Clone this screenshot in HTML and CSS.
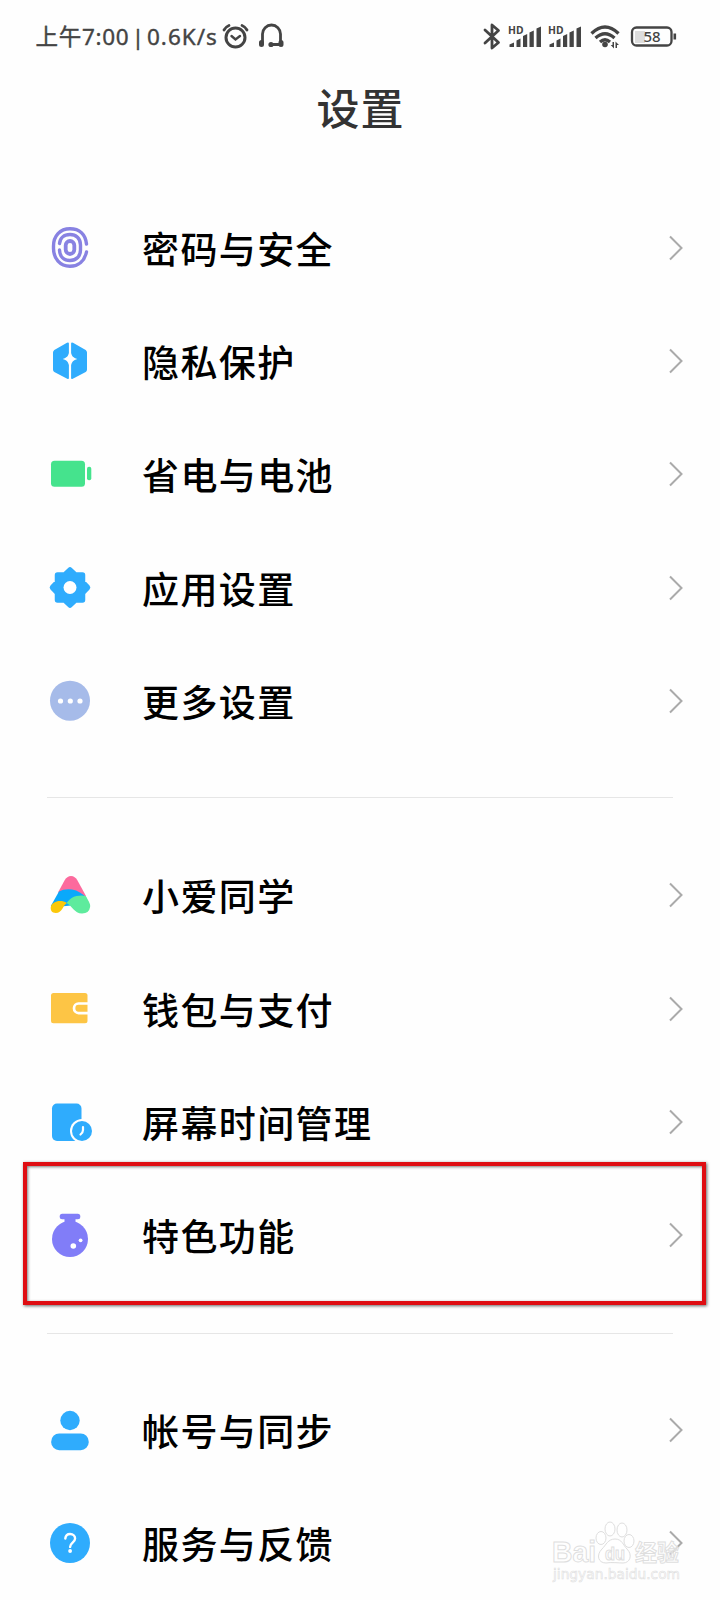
FILE: index.html
```html
<!DOCTYPE html>
<html lang="zh-CN">
<head>
<meta charset="utf-8">
<title>设置</title>
<link rel="stylesheet" href="styles.css">
</head>
<body>
<div class="screen">
  <header class="status">
    <span class="clock">上午7:00</span><span class="bar">|</span><span class="speed">0.6K/s</span>
    <svg class="left-icons" width="64" height="32" viewBox="222 21 64 32" fill="none" stroke="#444" stroke-linecap="round">
      <circle cx="235.500" cy="37.500" r="9.500" stroke-width="3"/>
      <path d="M231.500 36l4 3.500 4.500-3.500" stroke-width="2.400"/>
      <path d="M224 30q1.500-3 5-4.500M247 30q-1.500-3-5-4.500" stroke-width="2.800"/>
      <path d="M262.500 42.500v-8.500a9 9 0 0 1 18 0v8.500M272 44.500h8" stroke-width="2.800"/>
      <path d="M261.500 42.500v2M281 42.500v2" stroke-width="5"/>
      <circle cx="271" cy="44.500" r="2.600" fill="#444" stroke="none"/>
    </svg>
    <svg class="right-icons" width="206" height="36" viewBox="478 19 206 36" fill="none" stroke="#444">
      <path d="M485 30l13.500 12.500-6.500 5.500v-23l6.500 5.500L485 43" stroke-width="2.800" stroke-linejoin="round" stroke-linecap="round"/>
      <g fill="#444" stroke="none">
        <text class="hd" x="508" y="34" textLength="15.500" lengthAdjust="spacingAndGlyphs">HD</text>
        <text class="hd" x="548" y="34" textLength="15.500" lengthAdjust="spacingAndGlyphs">HD</text>
        <path id="signal" d="M509.500 47v-2.500l4.500-2V47zM516.500 47v-6.500l4-2V47zM523 47V36l4.200-2v13zM529.500 47V32.500l4.300-2V47zM536.500 47V28.500l4.500-2V47z"/>
        <use href="#signal" x="40"/>
        <circle cx="605" cy="44.500" r="2.800"/>
        <path d="M614 42v6.500l-3.300-3.500h1.800v-3zM615.500 48v-6.500l3.500 3.500h-2v3z"/>
      </g>
      <path d="M591.500 33.500q13.500-13 27 0M595.500 38q9.500-8.500 19 0M600 42q5-4.500 10 0" stroke-width="3.300"/>
      <path d="M635 31h10v12h-10z" fill="#ddd" stroke="none"/>
      <rect x="632" y="27.500" width="39.500" height="18" rx="4.500" stroke-width="2.300"/>
      <path d="M674.800 33.500v6" stroke-width="2.600"/>
      <text class="charge" x="643.500" y="42.200">58</text>
    </svg>
  </header>
  <h1 class="title">设置</h1>

  <ul class="group">
    <li class="row">
      <svg class="icon" viewBox="0 0 48 48" fill="none" stroke="#8882e2" stroke-width="3.400" stroke-linecap="round">
        <path d="M40.500 28C38.500 37 32.500 42.300 24 42.300 14 42.300 7.500 34.500 7.500 24.500v-2.500C7.500 12 14 4.700 24 4.700c9.500 0 15.500 5.500 16.500 15.300"/>
        <path d="M13.500 19.500c.5-5.500 4.500-9 10.500-9s10.500 4 10.500 10.500v5c0 6-4 10.500-10.500 10.500-6 0-10.300-3.700-10.500-10.500"/>
        <rect x="19.700" y="17" width="8.600" height="13" rx="4.300" stroke-width="3.800"/>
      </svg>
      <span class="label">密码与安全</span><svg class="chevron" viewBox="0 0 16 28"><path d="M2 2.500L13.500 14 2 25.500"/></svg>
    </li>
    <li class="row">
      <svg class="icon" viewBox="0 0 48 48" fill="#2facfd">
        <path d="M22.900 6.500v9.500c-.7 3-2.200 4.800-6.200 6 4 1 5.500 3 6.200 6V41q0 1.500-1.700.7L8.300 35Q7 34.200 7 32.500v-17Q7 14 8.300 13L21 5.800q1.900-.6 1.900.7z"/>
        <path d="M25.100 6.500v9.500c.7 3 2.200 4.800 6.200 6-4 1-5.500 3-6.200 6V41q0 1.500 1.700.7L39.700 35q1.300-.8 1.300-2.500v-17q0-1.500-1.300-2.500L27 5.800q-1.900-.6-1.900.7z"/>
      </svg>
      <span class="label">隐私保护</span><svg class="chevron" viewBox="0 0 16 28"><path d="M2 2.500L13.500 14 2 25.500"/></svg>
    </li>
    <li class="row">
      <svg class="icon" viewBox="0 0 48 48" fill="#45e38d">
        <rect x="5" y="10.700" width="34" height="26" rx="3.500"/><rect x="41" y="16.700" width="4.300" height="13.500" rx="2"/>
      </svg>
      <span class="label">省电与电池</span><svg class="chevron" viewBox="0 0 16 28"><path d="M2 2.500L13.500 14 2 25.500"/></svg>
    </li>
    <li class="row">
      <svg class="icon" viewBox="0 0 48 48">
        <path d="M24 6l5.300 5h7.200v7.200L41.500 23.500l-5 5.300V36h-7.200L24 41l-5.300-5h-7.200v-7.200L6.500 23.500l5-5.300V11h7.200z" fill="#2facfd" stroke="#2facfd" stroke-width="5.500" stroke-linejoin="round"/>
        <circle cx="24" cy="23.500" r="6.500" fill="#fff"/>
      </svg>
      <span class="label">应用设置</span><svg class="chevron" viewBox="0 0 16 28"><path d="M2 2.500L13.500 14 2 25.500"/></svg>
    </li>
    <li class="row">
      <svg class="icon" viewBox="0 0 48 48">
        <circle cx="24" cy="23.700" r="20" fill="#a6bbe9"/>
        <g fill="#fff"><circle cx="14.500" cy="24" r="2.600"/><circle cx="24.300" cy="24" r="2.600"/><circle cx="34" cy="24" r="2.600"/></g>
      </svg>
      <span class="label">更多设置</span><svg class="chevron" viewBox="0 0 16 28"><path d="M2 2.500L13.500 14 2 25.500"/></svg>
    </li>
  </ul>

  <ul class="group">
    <li class="row">
      <svg class="icon" viewBox="0 0 48 48">
        <path d="M12 21.500L18.500 9.500q2.500-4.500 6.500-4.500t6.500 4.500L40 25 28 27z" fill="#fc6a9d"/>
        <path d="M4.800 35L13 20.500q5.500-3 13-2 8.500 1.500 14.500 8.500L30 34 10 36z" fill="#0aa9fb"/>
        <path d="M20.500 32q4.500-6 10-7 5.500-1 9.300 0l3 5.500c1.500 3 1.500 4 1.300 5.500q-1 6.500-8 6.500c-8 0-10-8-15.600-10.500z" fill="#5eeb9d"/>
        <path d="M4.800 36c.5-3.500 5-6 9-6 3 0 5 .5 7 2-4 2.500-4.500 10-11 10-4 0-5.500-3-5-6z" fill="#fbc80a"/>
      </svg>
      <span class="label">小爱同学</span><svg class="chevron" viewBox="0 0 16 28"><path d="M2 2.500L13.500 14 2 25.500"/></svg>
    </li>
    <li class="row">
      <svg class="icon" viewBox="0 0 48 48">
        <rect x="5" y="8" width="36.500" height="30.300" rx="2.500" fill="#fdc545"/>
        <path d="M42 18.500H32.500a4.500 4.800 0 0 0 0 9.600H42" fill="none" stroke="#fff" stroke-width="2.700"/>
      </svg>
      <span class="label">钱包与支付</span><svg class="chevron" viewBox="0 0 16 28"><path d="M2 2.500L13.500 14 2 25.500"/></svg>
    </li>
    <li class="row">
      <svg class="icon" viewBox="0 0 48 48">
        <rect x="6" y="5.500" width="29.500" height="37.500" rx="5" fill="#2facfd"/>
        <circle cx="36" cy="33" r="12" fill="#fefefe"/><circle cx="36" cy="33" r="10" fill="#2facfd"/>
        <path d="M37 29v3q0 2.500-2.500 4.500" fill="none" stroke="#fff" stroke-width="2.200" stroke-linecap="round"/>
      </svg>
      <span class="label">屏幕时间管理</span><svg class="chevron" viewBox="0 0 16 28"><path d="M2 2.500L13.500 14 2 25.500"/></svg>
    </li>
    <li class="row marked">
      <svg class="icon" viewBox="0 0 48 48">
        <g fill="#817df8"><rect x="13.700" y="2.800" width="20.600" height="5.500" rx="2.500"/><path d="M18.500 7h11v7h-11z"/><circle cx="24" cy="28" r="18"/></g>
        <circle cx="27.300" cy="35" r="2.800" fill="#fff"/><circle cx="34.600" cy="29.300" r="1.900" fill="#fff"/>
      </svg>
      <span class="label">特色功能</span><svg class="chevron" viewBox="0 0 16 28"><path d="M2 2.500L13.500 14 2 25.500"/></svg>
    </li>
  </ul>

  <ul class="group">
    <li class="row">
      <svg class="icon" viewBox="0 0 48 48" fill="#2facfd">
        <circle cx="24" cy="14.500" r="9.700"/><rect x="5.200" y="27.500" width="37.500" height="16.700" rx="8"/>
      </svg>
      <span class="label">帐号与同步</span><svg class="chevron" viewBox="0 0 16 28"><path d="M2 2.500L13.500 14 2 25.500"/></svg>
    </li>
    <li class="row">
      <svg class="icon" viewBox="0 0 48 48">
        <circle cx="24" cy="24" r="20" fill="#2facfd"/>
        <path d="M19.300 19.500q.5-4.500 4.800-4.500c3 0 5 1.900 5 4.600 0 4-5 4.200-5 8.300" fill="none" stroke="#fff" stroke-width="2.400" stroke-linecap="round"/>
        <circle cx="24.100" cy="32" r="1.900" fill="#fff"/>
      </svg>
      <span class="label">服务与反馈</span><svg class="chevron" viewBox="0 0 16 28"><path d="M2 2.500L13.500 14 2 25.500"/></svg>
    </li>
  </ul>

  <svg class="watermark" width="140" height="70" viewBox="548 1518 140 70">
    <g class="outline">
      <text class="brand" x="552" y="1562" textLength="44" lengthAdjust="spacingAndGlyphs">Bai</text>
      <ellipse cx="601" cy="1538" rx="5" ry="6.500"/><ellipse cx="610" cy="1529" rx="5" ry="7"/>
      <ellipse cx="622" cy="1530" rx="5" ry="7"/><ellipse cx="629" cy="1541" rx="5" ry="6.500"/>
      <path d="M615 1539c7 0 8 6 12 10 6 6 3 14-4 14-4 0-12-1-17 0-8 0-10-8-4-14 4-4 6-10 13-10z"/>
      <text class="du" x="605" y="1560" textLength="20" lengthAdjust="spacingAndGlyphs">du</text>
      <text class="jing" x="635" y="1561" textLength="44" lengthAdjust="spacingAndGlyphs">经验</text>
      <text class="url" x="553" y="1579" textLength="127" lengthAdjust="spacingAndGlyphs">jingyan.baidu.com</text>
    </g>
  </svg>
</div>
</body>
</html>
```
FILE: styles.css
```css
body {
  margin: 0;
  background: #fefefe;
  font-family: "Noto Sans CJK SC", "Noto Sans", sans-serif;
}
.screen {
  position: relative;
  width: 720px;
  height: 1600px;
  overflow: hidden;
}
.status {
  display: flex;
  align-items: center;
  height: 74px;
  box-sizing: border-box;
  padding: 0 36px 0 35.5px;
  font-family: "Noto Sans", "Noto Sans CJK SC", sans-serif;
  font-size: 22.5px;
  line-height: 32px;
  color: #444;
  white-space: nowrap;
  -webkit-text-stroke: 0.4px #444;
}
.clock { width: 96px; letter-spacing: 0.7px; }
.bar { width: 13px; text-align: center; margin-right: 2.5px; }
.speed { width: 75px; letter-spacing: 1px; }
.left-icons { flex: none; }
.right-icons { flex: none; margin-left: auto; }
.hd { font: 700 11px "Noto Sans", sans-serif; -webkit-text-stroke: 0; }
.charge { font: 500 15px "Noto Sans", sans-serif; fill: #444; stroke: none; -webkit-text-stroke: 0.3px #444; }
.title {
  margin: 0;
  height: 117px;
  padding: 1px 0 0 1px;
  box-sizing: border-box;
  text-align: center;
  font-size: 43px;
  font-weight: 500;
  line-height: 62px;
  letter-spacing: 1px;
  color: #333;
}
.group { list-style: none; margin: 0; padding: 0; }
.group + .group::before {
  content: "";
  display: block;
  height: 1px;
  margin: 39.7px 47px 40.3px;
  background: #e6e6e6;
}
.group + .group + .group::before { margin: 40.6px 47px 39.4px; }
.row {
  position: relative;
  display: flex;
  align-items: center;
  height: 113.33px;
  box-sizing: border-box;
  padding: 0 36px 0 46px;
}
.icon { width: 48px; height: 48px; flex: none; }
.label {
  flex: 1;
  padding: 0 0 0 48px;
  font-size: 37px;
  line-height: 54px;
  font-weight: 500;
  letter-spacing: 1.4px;
  color: #000;
}
.chevron { width: 16px; height: 28px; flex: none; fill: none; stroke: #aaa; stroke-width: 2; }
.marked::after {
  content: "";
  position: absolute;
  left: 23px;
  right: 14px;
  top: -17px;
  bottom: -13px;
  border: 4px solid #df0d12;
  box-sizing: border-box;
  box-shadow: 1px 1px 3px rgba(0, 0, 0, 0.6), inset 1px 1px 3px rgba(0, 0, 0, 0.5);
}
.watermark { position: absolute; left: 548px; top: 1518px; }
.outline { fill: rgba(255, 255, 255, 0.6); stroke: #dedede; stroke-width: 1; }
.brand { font: bold 29px "Liberation Sans", sans-serif; }
.du { font: bold 18px "Liberation Sans", sans-serif; }
.jing { font: bold 23px "Noto Sans CJK SC", sans-serif; }
.url { font: 14px "DejaVu Sans", sans-serif; stroke-width: 0.6; }
```
